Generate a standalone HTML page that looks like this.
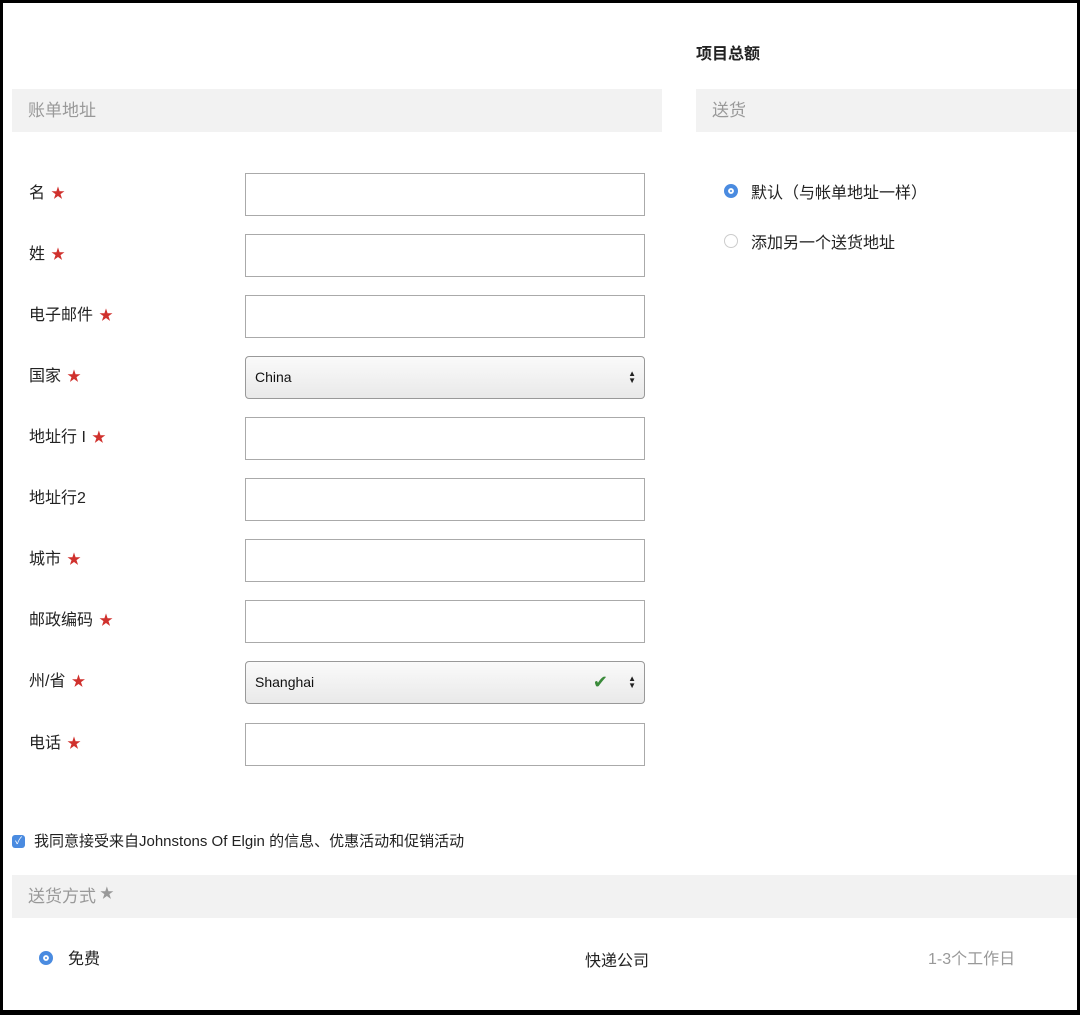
<!DOCTYPE html><html><head><meta charset="utf-8"><style>
body{margin:0;width:1080px;height:1015px;background:#000;overflow:hidden;font-family:"Liberation Sans","Noto Sans CJK SC",sans-serif;}
.pg{position:absolute;left:3px;top:3px;width:1074px;height:1007px;background:#fff;}
.a{position:absolute;}
.bar{position:absolute;background:#f2f2f2;height:43px;color:#999;font-size:17px;line-height:43px;padding-left:16px;box-sizing:border-box;}
.lb{position:absolute;left:26px;font-size:16px;color:#222;}
.lb b{color:#d0312d;font-size:14px;font-weight:normal;margin-left:6px;}
.in{position:absolute;left:242px;width:400px;height:43px;border:1px solid #aaa;box-sizing:border-box;background:#fff;}
.sel{border-radius:4px;background:linear-gradient(#fafafa,#e9e9e9);border-color:#999;font-size:14px;line-height:41px;padding-left:9px;color:#111;}
.ar{position:absolute;right:8px;top:13px;font-size:8px;line-height:7px;color:#222;}
.rad{position:absolute;width:14px;height:14px;border-radius:50%;box-sizing:border-box;}
.on{background:#4a8be0;border:4px solid #4a8be0;box-shadow:inset 0 0 0 2px #fff;}
.off{border:1px solid #ccc;background:#fff;}
.t{position:absolute;font-size:16px;color:#222;}
</style></head><body><div class="pg">
<div class="t" style="left:693px;top:37px;font-weight:bold;">项目总额</div>
<div class="bar" style="left:9px;top:86px;width:650px;">账单地址</div>
<div class="bar" style="left:693px;top:86px;width:381px;">送货</div>
<div class="rad on" style="left:721px;top:181px;"></div><div class="t" style="left:748px;top:176px;">默认（与帐单地址一样）</div>
<div class="rad off" style="left:721px;top:231px;"></div><div class="t" style="left:748px;top:226px;">添加另一个送货地址</div>

<div class="lb" style="top:176px">名<b>★</b></div><div class="in" style="top:170px"></div>
<div class="lb" style="top:237px">姓<b>★</b></div><div class="in" style="top:231px"></div>
<div class="lb" style="top:298px">电子邮件<b>★</b></div><div class="in" style="top:292px"></div>
<div class="lb" style="top:359px">国家<b>★</b></div><div class="in sel" style="top:353px">China<div class="ar">▲<br>▼</div></div>
<div class="lb" style="top:420px">地址行 I<b>★</b></div><div class="in" style="top:414px"></div>
<div class="lb" style="top:481px">地址行2</div><div class="in" style="top:475px"></div>
<div class="lb" style="top:542px">城市<b>★</b></div><div class="in" style="top:536px"></div>
<div class="lb" style="top:603px">邮政编码<b>★</b></div><div class="in" style="top:597px"></div>
<div class="lb" style="top:664px">州/省<b>★</b></div><div class="in sel" style="top:658px">Shanghai<span style="position:absolute;right:36px;color:#3a8a3a;font-size:18px;">✔</span><div class="ar">▲<br>▼</div></div>
<div class="lb" style="top:726px">电话<b>★</b></div><div class="in" style="top:720px"></div>

<div class="a" style="left:9px;top:832px;width:13px;height:13px;background:#4a8be0;border-radius:3px;color:#fff;font-size:10px;line-height:13px;text-align:center;">✓</div>
<div class="t" style="left:31px;top:827px;font-size:15px;">我同意接受来自Johnstons Of Elgin 的信息、优惠活动和促销活动</div>
<div class="bar" style="left:9px;top:872px;width:1065px;">送货方式<span style="font-size:14px;vertical-align:top;line-height:36px;"> ★</span></div>
<div class="rad on" style="left:36px;top:948px;"></div><div class="t" style="left:65px;top:942px;">免费</div>
<div class="t" style="left:582px;top:944px;">快递公司</div>
<div class="t" style="left:925px;top:942px;color:#999;">1-3个工作日</div>
</div></body></html>
